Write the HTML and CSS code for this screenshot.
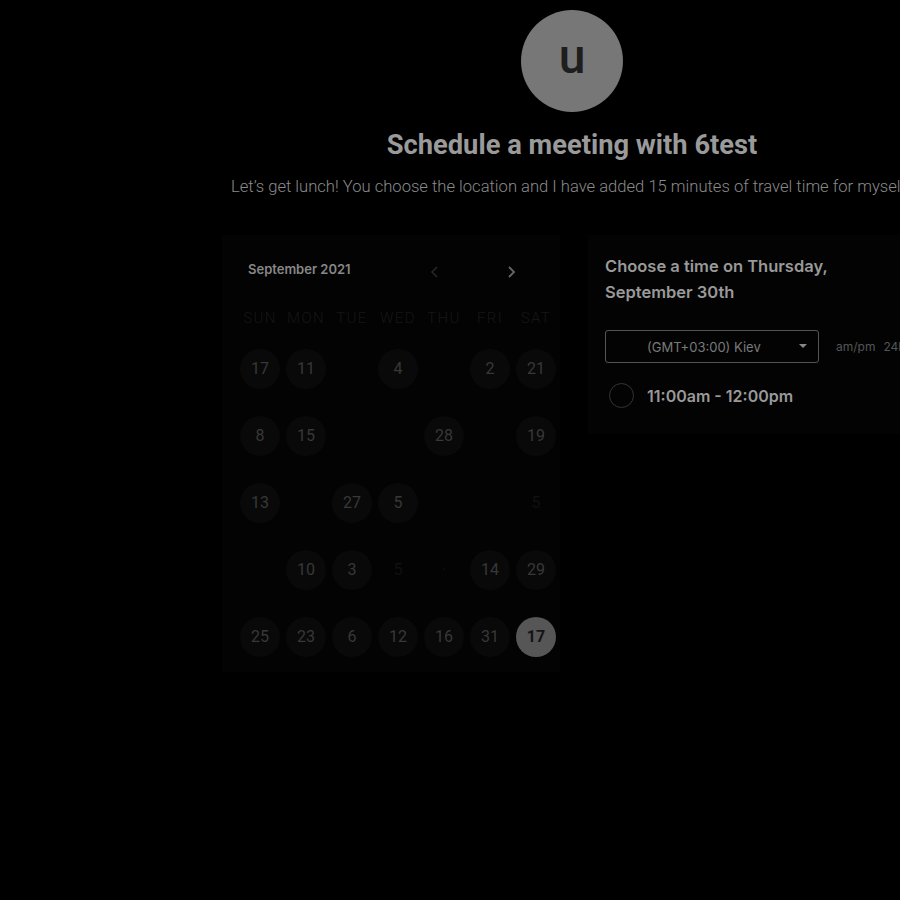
FILE: index.html
```html
<!DOCTYPE html>
<html>
<head>
<meta charset="utf-8">
<link rel="stylesheet" href="styles.css">
</head>
<body>
<div class="page">
  <header class="hero">
    <div class="avatar">u</div>
    <h1 class="title">Schedule a meeting with 6test</h1>
    <p class="subtitle">Let’s get lunch! You choose the location and I have added 15 minutes of travel time for myself.</p>
  </header>
  <main class="panels">
    <section class="calendar">
      <div class="cal-head">
        <span class="month">September 2021</span>
        <span class="nav">
          <svg class="arrow prev" width="10" height="14" viewBox="0 0 10 14"><path d="M7 2 L2 7 L7 12" fill="none" stroke="currentColor" stroke-width="1.6"/></svg>
          <svg class="arrow next" width="10" height="14" viewBox="0 0 10 14"><path d="M3 2 L8 7 L3 12" fill="none" stroke="currentColor" stroke-width="1.8"/></svg>
        </span>
      </div>
      <div class="weekdays">
        <span>SUN</span><span>MON</span><span>TUE</span><span>WED</span><span>THU</span><span>FRI</span><span>SAT</span>
      </div>
      <div class="days">
        <span class="day"><b>17</b></span><span class="day"><b>11</b></span><span class="day"></span><span class="day"><b>4</b></span><span class="day"></span><span class="day"><b>2</b></span><span class="day"><b>21</b></span>
        <span class="day"><b>8</b></span><span class="day"><b>15</b></span><span class="day"></span><span class="day"></span><span class="day"><b>28</b></span><span class="day"></span><span class="day"><b>19</b></span>
        <span class="day"><b>13</b></span><span class="day"></span><span class="day"><b>27</b></span><span class="day"><b>5</b></span><span class="day"></span><span class="day"></span><span class="day"><i>5</i></span>
        <span class="day"></span><span class="day"><b>10</b></span><span class="day"><b>3</b></span><span class="day"><i>5</i></span><span class="day"><i>·</i></span><span class="day"><b>14</b></span><span class="day"><b>29</b></span>
        <span class="day"><b>25</b></span><span class="day"><b>23</b></span><span class="day"><b>6</b></span><span class="day"><b>12</b></span><span class="day"><b>16</b></span><span class="day"><b>31</b></span><span class="day"><b class="selected">17</b></span>
      </div>
    </section>
    <section class="times">
      <h2 class="times-title">Choose a time on Thursday,<br>September 30th</h2>
      <div class="tz-row">
        <div class="select">
          <span class="select-text">(GMT+03:00) Kiev</span>
          <svg class="caret" width="8" height="5" viewBox="0 0 8 5"><path d="M0 0 H8 L4 4 Z" fill="currentColor"/></svg>
        </div>
        <span class="fmt">am/pm</span><span class="fmt">24h</span>
      </div>
      <div class="slot">
        <span class="radio"></span>
        <span class="slot-text">11:00am - 12:00pm</span>
      </div>
    </section>
  </main>
</div>
</body>
</html>
```
FILE: styles.css
```css
html, body {
  margin: 0;
  padding: 0;
  background: #000;
  overflow: hidden;
  height: 900px;
}
.page {
  width: 1144px;
}
.hero {
  display: flex;
  flex-direction: column;
  align-items: center;
  padding-top: 10px;
}
.avatar {
  width: 102px;
  height: 102px;
  border-radius: 50%;
  background: #777;
  color: #1e1e1e;
  font-family: Roboto, "Liberation Sans", sans-serif;
  font-weight: 500;
  font-size: 48px;
  line-height: 94px;
  text-align: center;
}
.title {
  margin: 16px 0 0;
  font-family: Roboto, "Liberation Sans", sans-serif;
  font-weight: 700;
  font-size: 27.3px;
  line-height: 34px;
  color: #9a9a9a;
}
.subtitle {
  align-self: flex-start;
  margin: 15px 0 0 231px;
  white-space: nowrap;
  font-family: Roboto, "Liberation Sans", sans-serif;
  font-weight: 300;
  font-size: 16.6px;
  line-height: 20px;
  color: #8a8a8a;
}
.panels {
  display: flex;
  align-items: flex-start;
  gap: 28px;
  margin: 38px 0 0 222px;
}
.calendar {
  width: 338px;
  background: #030303;
  padding: 22px 1px 2px 15px;
  box-sizing: border-box;
  font-family: Roboto, "Liberation Sans", sans-serif;
}
.cal-head {
  display: flex;
  align-items: center;
  height: 24px;
  padding-left: 11px;
}
.month {
  font-family: Inter, "Noto Sans", sans-serif;
  font-weight: 600;
  font-size: 13px;
  color: #878787;
  width: 182px;
}
.nav {
  display: flex;
  gap: 66px;
  margin-top: 6px;
}
.arrow.prev { color: #262626; }
.arrow.next { color: #666; }
.weekdays {
  display: grid;
  grid-template-columns: repeat(7, 46px);
  margin-top: 25px;
  height: 24px;
  align-items: center;
}
.weekdays span {
  text-align: center;
  font-weight: 300;
  font-size: 15px;
  letter-spacing: 1.4px;
  color: #161616;
}
.days {
  display: grid;
  grid-template-columns: repeat(7, 46px);
  grid-auto-rows: 67px;
  margin-top: 5px;
}
.day {
  display: flex;
  align-items: center;
  justify-content: center;
}
.day b {
  width: 40px;
  height: 40px;
  border-radius: 50%;
  background: #090909;
  color: #383838;
  font-weight: 400;
  font-size: 16px;
  display: flex;
  align-items: center;
  justify-content: center;
}
.day i {
  font-style: normal;
  font-size: 16px;
  color: #101010;
}
.day b.selected {
  background: #565656;
  color: #141414;
  font-weight: 700;
}
.times {
  width: 330px;
  background: #030303;
  padding: 18px 0 26px 17px;
  font-family: Inter, "Noto Sans", sans-serif;
}
.times-title {
  margin: 0;
  font-weight: 600;
  font-size: 16.5px;
  line-height: 26px;
  color: #999;
}
.tz-row {
  display: flex;
  align-items: center;
  margin-top: 25px;
}
.select {
  width: 214px;
  height: 33px;
  box-sizing: border-box;
  border: 1px solid #555;
  border-radius: 3px;
  display: flex;
  align-items: center;
  padding: 0 11px 0 41px;
}
.select-text {
  flex: 1;
  font-size: 13px;
  color: #7a7a7a;
}
.caret { color: #888; }
.fmt {
  font-size: 12px;
  color: #555;
  margin-left: 17px;
}
.fmt + .fmt { margin-left: 8px; }
.slot {
  display: flex;
  align-items: center;
  margin-top: 20px;
  padding-left: 4px;
}
.radio {
  width: 23px;
  height: 23px;
  border: 1px solid #333;
  border-radius: 50%;
}
.slot-text {
  margin-left: 13px;
  font-weight: 600;
  font-size: 16px;
  color: #999;
}
```
